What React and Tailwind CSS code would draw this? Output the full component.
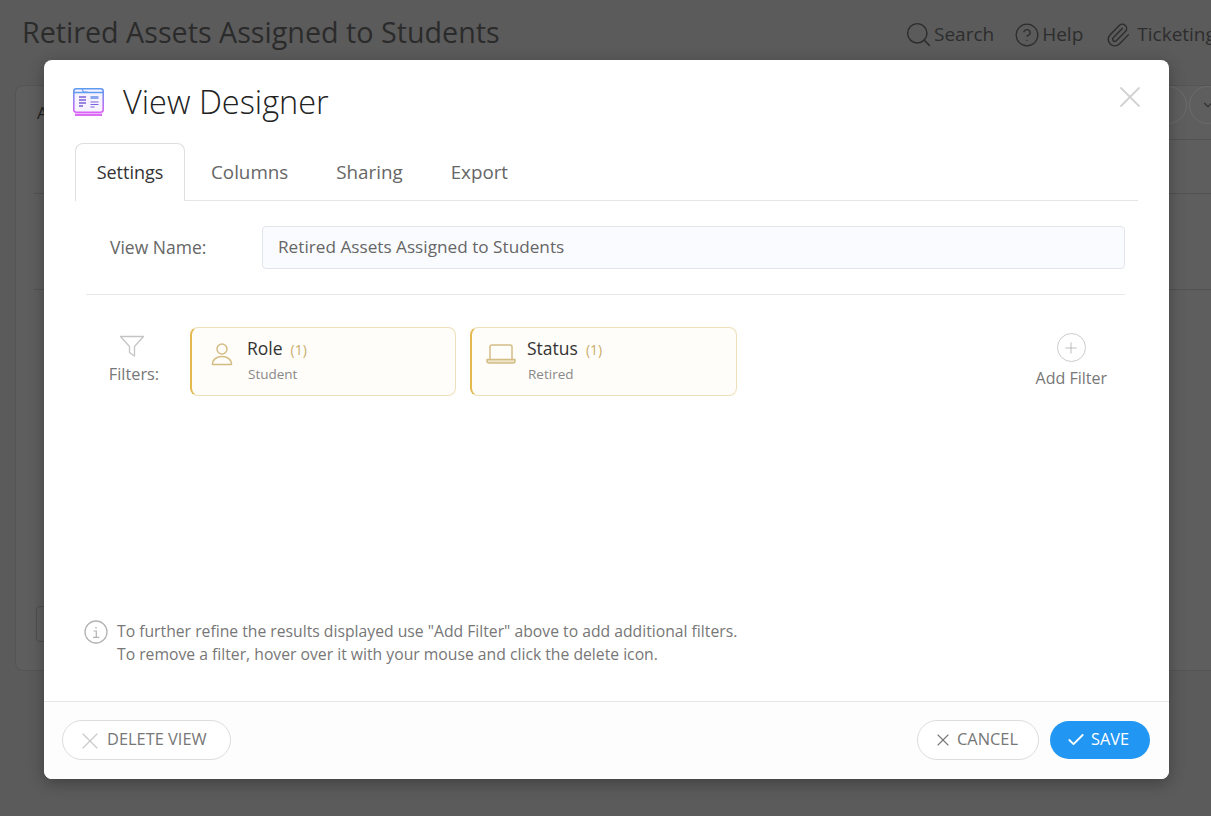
import React from 'react'
import { Search, CircleHelp, Paperclip, X, Check, Plus, ChevronDown } from 'lucide-react'

const UserIcon = () => (
  <svg width="24" height="26" viewBox="0 0 24 26" fill="none" stroke="#d4bd85" strokeWidth="1.5">
    <circle cx="12" cy="8" r="5" />
    <path d="M2.500 23.500c0-5 4-8 9.500-8s9.500 3 9.500 8z" strokeLinejoin="round" />
  </svg>
)

const LaptopIcon = () => (
  <svg width="30" height="22" viewBox="0 0 30 22" fill="none" stroke="#d4bd85" strokeWidth="1.5" className="-ml-[4px] mt-[2px]">
    <path d="M4 16V4a2 2 0 0 1 2-2h18a2 2 0 0 1 2 2v12" />
    <path d="M1 16.500h28v1.500a2 2 0 0 1-2 2H3a2 2 0 0 1-2-2z" strokeLinejoin="round" fill="#eee4c8" />
  </svg>
)

const FunnelIcon = () => (
  <svg width="26" height="23" viewBox="0 0 26 23" fill="none" stroke="#c4c4c4" strokeWidth="1.300" strokeLinejoin="round" className="-ml-[4px] mb-[5px]">
    <path d="M1.500 1.500h23l-9 10v9.500l-5-3.500v-6z" />
  </svg>
)

const InfoIcon = () => (
  <svg width="24" height="24" viewBox="0 0 24 24" fill="none" stroke="#b4b4b4" className="shrink-0">
    <circle cx="12" cy="12" r="11" strokeWidth="1.300" />
    <path d="M12 7v1.600" strokeWidth="1.500" />
    <path d="M9.500 11h2.800v6M9 17.300h6.300" strokeWidth="1.200" />
  </svg>
)

const ViewLogo = () => (
  <svg width="31" height="28" viewBox="0 0 31 28" fill="none" className="shrink-0">
    <defs>
      <linearGradient id="viewGrad" x1="0" y1="0" x2="0" y2="1">
        <stop offset="0" stopColor="#5f9bf0" />
        <stop offset="1" stopColor="#d964f5" />
      </linearGradient>
    </defs>
    <rect x="0.800" y="0.800" width="29.400" height="23.400" rx="2.500" stroke="url(#viewGrad)" strokeWidth="1.600" fill="#f6f2ff" />
    <path d="M1 4.500h29" stroke="#5f9bf0" strokeWidth="1.500" />
    <path d="M9 1l1.500 3h4" stroke="#5f9bf0" strokeWidth="1.200" />
    <path d="M2 25.500h27v2.500h-27z" fill="#dd6cf5" />
    <path d="M6 9h7M6 12h7M6 15h7M6 18h4" stroke="#7a62d8" strokeWidth="1.300" />
    <path d="M17.500 9.500h8" stroke="#8aa6ec" strokeWidth="3" />
    <path d="M17.500 14h8M17.500 16.500h8M17.500 19h4" stroke="#7a62d8" strokeWidth="1.100" />
  </svg>
)

const FilterCard = ({ icon, title, value, width }) => (
  <div className={`flex h-[69px] rounded-lg border border-[#eddfb9] border-l-2 border-l-[#e5b84f] bg-[#fffdf9] ${width}`}>
    <div className="w-[55px] pl-[18px] pt-[13px]">{icon}</div>
    <div className="pt-[8px]">
      <div className="flex items-baseline gap-[8px]">
        <span className="text-[17.500px] leading-[24px] text-[#333]">{title}</span>
        <span className="text-[14px] text-[#c9ad6c]">(1)</span>
      </div>
      <div className="mt-[5px] pl-[1px] text-[13.500px] leading-[18px] text-[#888]">{value}</div>
    </div>
  </div>
)

export default function App() {
  return (
    <div className="relative h-[816px] w-full overflow-hidden bg-[#5b5b5b] font-['Open_Sans',sans-serif]">
      {/* page behind the overlay */}
      <div className="flex h-[70px] items-start justify-between pl-[22px] pt-[12px]">
        <h1 className="whitespace-nowrap text-[28.700px] leading-[40px] text-[#2b2b2b]">Retired Assets Assigned to Students</h1>
        <div className="mt-[8px] flex w-[309px] shrink-0 items-center gap-[20px] overflow-hidden whitespace-nowrap text-[19px] text-[#2d2d2d]">
          <span className="ml-[2px] flex items-center gap-[1px]"><Search size={29} strokeWidth={1.200} className="shrink-0" />Search</span>
          <span className="flex items-center gap-[2px]"><CircleHelp size={26} strokeWidth={1.200} className="shrink-0" />Help</span>
          <span className="ml-[2px] flex items-center gap-[6px]"><Paperclip size={26} strokeWidth={1.300} className="shrink-0" />Ticketing</span>
        </div>
      </div>
      <div className="ml-[15px] mt-[15px] h-[586px] w-[1230px] rounded-lg border border-[#545454] bg-[#5e5e5e]">
        <div className="flex h-[53px] items-start justify-end gap-[2px] pl-[21px] pr-[17px]">
          <span className="mr-auto pt-[15px] text-[17px] leading-[24px] text-[#222]">A</span>
          <div className="h-[38px] w-[38px] rounded-full border border-[#6b6b6b]" />
          <div className="flex h-[38px] w-[38px] items-center justify-center rounded-full border border-[#6b6b6b] text-[#333]"><ChevronDown size={14} /></div>
        </div>
        <div className="ml-[30px] h-px bg-[#525252]" />
        <div className="ml-[18px] h-[54px] border-b border-[#525252]" />
        <div className="ml-[18px] h-[96px] border-b border-[#525252]" />
        <div className="ml-[20px] mt-[316px] h-[36px] w-[40px] rounded border border-[#4e4e4e]" />
      </div>

      {/* modal */}
      <div className="absolute left-[44px] top-[60px] flex h-[719px] w-[1125px] flex-col overflow-hidden rounded-lg bg-white shadow-[0_4px_16px_rgba(0,0,0,0.3)]">
        <div className="relative flex h-[83px] shrink-0 items-start pl-[29px] pt-[28px]">
          <ViewLogo />
          <h2 className="ml-[19px] -mt-[8px] text-[32.500px] font-light leading-[44px] text-[#222]">View Designer</h2>
          <button className="absolute right-[21px] top-[19px] text-[#d2d2d2]"><X size={36} strokeWidth={1.200} /></button>
        </div>

        <div className="mx-[31px] flex h-[58px] shrink-0 border-b border-[#e6e6e6] text-[18.800px] text-[#666]">
          <div className="-mb-px flex h-[58px] w-[110px] items-center justify-center rounded-t-lg border border-b-0 border-[#dedede] bg-white text-[18px] text-[#333]">Settings</div>
          <div className="ml-[26px] flex items-center pt-[2px]">Columns</div>
          <div className="ml-[48px] flex items-center pt-[2px]">Sharing</div>
          <div className="ml-[48px] flex items-center pt-[2px]">Export</div>
        </div>

        <div className="ml-[42px] mr-[44px] flex h-[94px] shrink-0 items-start border-b border-[#e8e8e8] pt-[25px]">
          <label className="w-[176px] pl-[24px] pt-[9px] text-[17.500px] leading-[24px] text-[#666]">View Name:</label>
          <div className="flex h-[43px] w-[863px] items-center rounded border border-[#e2e4ec] bg-[#fafbfe] pb-[2px] pl-[15px] text-[17.200px] text-[#666]">
            Retired Assets Assigned to Students
          </div>
        </div>

        <div className="ml-[42px] mr-[44px] flex h-[323px] shrink-0 items-start pt-[32px]">
          <div className="mr-[8px] mt-[8px] flex w-[96px] flex-col items-center text-[16.300px] leading-[22px] text-[#777]">
            <FunnelIcon />
            Filters:
          </div>
          <div className="flex gap-[14px]">
            <FilterCard width="w-[266px]" icon={<UserIcon />} title="Role" value="Student" />
            <FilterCard width="w-[267px]" icon={<LaptopIcon />} title="Status" value="Retired" />
          </div>
          <div className="ml-auto mr-[18px] flex flex-col items-center pt-[6px] text-[16px] leading-[22px] text-[#777]">
            <div className="mb-[5px] flex h-[29px] w-[29px] items-center justify-center rounded-full border border-[#ccc] text-[#aaa]">
              <Plus size={18} strokeWidth={1} />
            </div>
            Add Filter
          </div>
        </div>

        <div className="ml-[40px] flex h-[83px] shrink-0 items-start gap-[9px] pt-[2px] text-[15.720px] leading-[23px] text-[#777]">
          <InfoIcon />
          <div>
            To further refine the results displayed use "Add Filter" above to add additional filters.<br />
            To remove a filter, hover over it with your mouse and click the delete icon.
          </div>
        </div>

        <div className="flex flex-1 items-center justify-between border-t border-[#e6e6e6] bg-[#fdfdfd] pb-[2px] pl-[18px] pr-[19px] text-[16.400px] text-[#777]">
          <button className="flex h-[40px] w-[169px] items-center gap-[3px] rounded-full border border-[#ddd] bg-white pl-[13px]">
            <X size={28} strokeWidth={1} className="mt-[3px] text-[#c8c8c8]" />DELETE VIEW
          </button>
          <div className="flex items-center gap-[11px]">
            <button className="flex h-[40px] w-[122px] items-center gap-[4px] rounded-full border border-[#ddd] bg-white pl-[15px]">
              <X size={20} strokeWidth={1.300} />CANCEL
            </button>
            <button className="flex h-[38px] w-[100px] items-center gap-[5px] rounded-full bg-[#2196f3] pl-[16px] text-white">
              <Check size={20} strokeWidth={2.200} />SAVE
            </button>
          </div>
        </div>
      </div>
    </div>
  )
}
